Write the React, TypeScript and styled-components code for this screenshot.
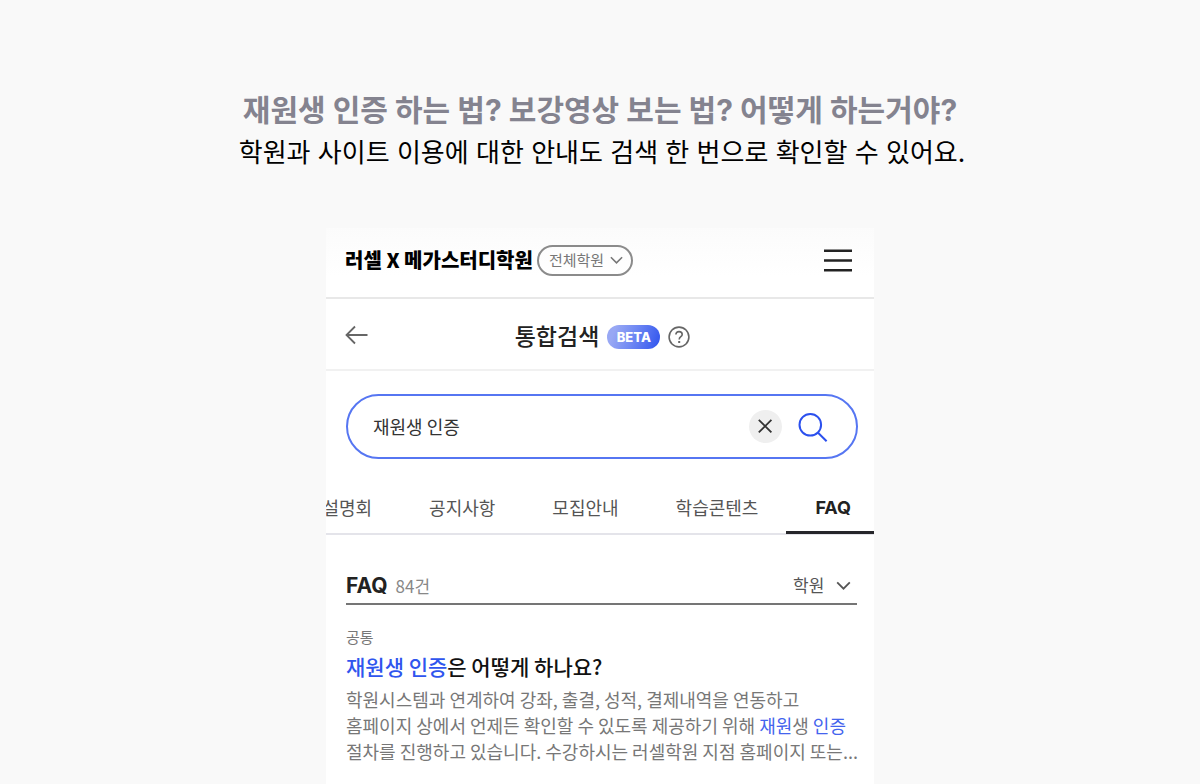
import React, { useState } from "react";
import styled, { createGlobalStyle } from "styled-components";

const GlobalStyle = createGlobalStyle`
  *, *::before, *::after { box-sizing: border-box; }
  body {
    margin: 0;
    background: #f9f9f9;
    color: #222;
    font-family: "Noto Sans CJK KR", "Noto Sans", sans-serif;
  }
  h1, h2, h3, p { margin: 0; }
  button, input, select { font: inherit; color: inherit; }
  button { padding: 0; border: 0; background: none; cursor: pointer; }
`;

const Page = styled.main`
  display: flex;
  flex-direction: column;
  align-items: center;
  min-height: 100vh;
  padding-top: 88px;
`;

const Intro = styled.header`
  font-family: Inter, "Noto Sans CJK KR", sans-serif;
  text-align: center;
`;

const Headline = styled.h1`
  color: #84838f;
  font-size: 30px;
  font-weight: 700;
  line-height: 44px;
`;

const Lead = styled.p`
  padding-left: 4px;
  color: #000;
  font-size: 26px;
  line-height: 42px;
`;

const Phone = styled.section`
  flex: 1;
  width: 100%;
  max-width: 548px;
  margin-top: 54px;
  overflow: hidden;
  background: linear-gradient(#fbfbfb, #fff 48px);
`;

const BrandBar = styled.div`
  display: flex;
  align-items: center;
  height: 71px;
  padding: 0 22px 5px 19px;
  border-bottom: 2px solid #e8e8e8;
`;

const Brand = styled.a`
  color: #000;
  font-size: 20px;
  font-weight: 900;
  line-height: 28px;
  text-decoration: none;
  white-space: nowrap;
`;

const SelectWrap = styled.label<{ $pill?: boolean }>`
  display: flex;
  align-items: center;
  gap: ${(p) => (p.$pill ? 5 : 11)}px;
  height: 31px;
  margin-left: ${(p) => (p.$pill ? "4px" : "auto")};
  padding: ${(p) => (p.$pill ? "0 8px 0 10px" : "0 6px 0 0")};
  border: ${(p) => (p.$pill ? "2px solid #8b8b8b" : "0")};
  border-radius: 16px;
  color: ${(p) => (p.$pill ? "#777" : "#555")};
`;

const Select = styled.select<{ $size: number; $width: number }>`
  width: ${(p) => p.$width}px;
  padding: 0;
  border: 0;
  appearance: none;
  background: transparent;
  font-size: ${(p) => p.$size}px;
  line-height: 24px;
`;

const MenuButton = styled.button`
  display: flex;
  margin-left: auto;
  color: #222;
`;

const TitleBar = styled.div`
  display: grid;
  grid-template-columns: 80px 1fr 80px;
  align-items: center;
  height: 72px;
  padding: 2px 18px 0 19px;
  border-bottom: 2px solid #f1f1f1;
`;

const IconButton = styled.button`
  display: flex;
  color: #666;
`;

const TitleGroup = styled.div`
  display: flex;
  align-items: center;
  justify-content: center;
  gap: 8px;
  padding: 4px 0 0 4px;
`;

const Title = styled.h2`
  padding-bottom: 4px;
  font-size: 23px;
  font-weight: 500;
  line-height: 32px;
  white-space: nowrap;
`;

const Beta = styled.span`
  width: 53px;
  border-radius: 12px;
  background: linear-gradient(110deg, #98a8f4 15%, #6f88f3 50%, #3558ee 95%);
  color: #fff;
  font-family: Inter, sans-serif;
  font-size: 13px;
  font-weight: 800;
  line-height: 24px;
  text-align: center;
`;

const SearchBox = styled.form`
  display: flex;
  align-items: center;
  height: 65px;
  margin: 23px 16px 0 20px;
  padding: 0 28px 0 25px;
  border: 2px solid #5676f2;
  border-radius: 33px;
  background: #fff;
`;

const SearchInput = styled.input`
  flex: 1;
  min-width: 0;
  padding: 0 0 2px;
  border: 0;
  outline: 0;
  background: transparent;
  color: #333;
  font-size: 18px;
  line-height: 28px;
`;

const ClearButton = styled.button`
  display: flex;
  align-items: center;
  justify-content: center;
  width: 33px;
  height: 33px;
  margin-right: 16px;
  border-radius: 50%;
  background: #efefef;
  color: #333;
`;

const SearchButton = styled.button`
  display: flex;
  color: #2b50ee;
`;

const Tabs = styled.div`
  display: flex;
  justify-content: flex-end;
  height: 50px;
  margin-top: 26px;
  box-shadow: inset 0 -2px #e4e4ea;
`;

const Tab = styled.button<{ $active?: boolean }>`
  flex: none;
  height: ${(p) => (p.$active ? 49 : 50)}px;
  padding: ${(p) => (p.$active ? "0 23px 0 29px" : "0 28px 6px 29px")};
  border-bottom: ${(p) => (p.$active ? "3px solid #26262a" : "0")};
  color: ${(p) => (p.$active ? "#222" : "#555")};
  font-family: ${(p) => (p.$active ? "Inter, sans-serif" : "inherit")};
  font-size: 18px;
  font-weight: ${(p) => (p.$active ? 700 : 400)};
  line-height: 28px;
`;

const Results = styled.section`
  padding: 32px 17px 8px 20px;
`;

const ResultsHead = styled.div`
  display: flex;
  align-items: center;
  height: 38px;
  border-bottom: 2px solid #757575;
`;

const ResultsTitle = styled.h2`
  padding-top: 1px;
  font-family: Inter, sans-serif;
  font-size: 21px;
  font-weight: 700;
  line-height: 28px;
`;

const Count = styled.span`
  margin-left: 8px;
  padding-top: 1px;
  color: #888;
  font-size: 17px;
  line-height: 28px;
`;

const Entry = styled.article`
  padding-top: 21px;
`;

const Category = styled.p`
  color: #777;
  font-size: 15px;
  line-height: 22px;
`;

const Question = styled.h3`
  margin-top: 1px;
  color: #111;
  font-size: 21px;
  font-weight: 500;
  line-height: 34px;
`;

const Answer = styled.p`
  margin-top: 3px;
  color: #777;
  font-size: 18px;
  line-height: 26px;
  white-space: nowrap;
`;

const Mark = styled.em`
  color: #2f55ee;
  font-style: normal;
`;

const AnswerMark = styled(Mark)`
  color: #4464ee;
`;

const Chevron = ({ width, height }: { width: number; height: number }) => (
  <svg width={width} height={height} viewBox="0 0 16 10" fill="none" stroke="currentColor" strokeWidth="2" aria-hidden="true">
    <path d="M1 1.5 8 8.5 15 1.5" />
  </svg>
);

const tabs = ["설명회", "공지사항", "모집안내", "학습콘텐츠", "FAQ"];

export default function App() {
  const [query, setQuery] = useState("재원생 인증");
  const [active, setActive] = useState("FAQ");

  return (
    <>
      <GlobalStyle />
      <Page>
        <Intro>
          <Headline>재원생 인증 하는 법? 보강영상 보는 법? 어떻게 하는거야?</Headline>
          <Lead>학원과 사이트 이용에 대한 안내도 검색 한 번으로 확인할 수 있어요.</Lead>
        </Intro>
        <Phone>
          <BrandBar>
            <Brand href="#">러셀 X 메가스터디학원</Brand>
            <SelectWrap $pill>
              <Select $size={15} $width={56} aria-label="학원 선택">
                <option>전체학원</option>
              </Select>
              <Chevron width={13} height={8} />
            </SelectWrap>
            <MenuButton type="button" aria-label="메뉴">
              <svg width="28" height="24" viewBox="0 0 28 24" stroke="currentColor" strokeWidth="2.4" aria-hidden="true">
                <path d="M0 2.8H28M0 12.5H28M0 22.2H28" />
              </svg>
            </MenuButton>
          </BrandBar>
          <TitleBar>
            <IconButton type="button" aria-label="뒤로">
              <svg width="23" height="20" viewBox="0 0 23 20" fill="none" stroke="currentColor" strokeWidth="1.8" aria-hidden="true">
                <path d="M22.5 10H1.5M10 1.5 1.5 10 10 18.5" />
              </svg>
            </IconButton>
            <TitleGroup>
              <Title>통합검색</Title>
              <Beta>BETA</Beta>
              <IconButton type="button" aria-label="도움말">
                <svg width="22" height="22" viewBox="0 0 22 22" fill="none" stroke="currentColor" strokeWidth="1.6" aria-hidden="true">
                  <circle cx="11" cy="11" r="9.9" />
                  <path d="M7.9 8.6C7.9 6.7 9.2 5.6 11 5.6S14.2 6.7 14.2 8.4C14.2 10.7 11.2 10.6 11.2 13.4" />
                  <path d="M11.2 15V17" strokeWidth="2" />
                </svg>
              </IconButton>
            </TitleGroup>
          </TitleBar>
          <SearchBox role="search" onSubmit={(e) => e.preventDefault()}>
            <SearchInput aria-label="검색어" value={query} onChange={(e) => setQuery(e.target.value)} />
            <ClearButton type="button" aria-label="지우기" onClick={() => setQuery("")}>
              <svg width="15" height="15" viewBox="0 0 15 15" stroke="currentColor" strokeWidth="1.8" aria-hidden="true">
                <path d="M.8.8 13.4 13.4M13.4.8.8 13.4" />
              </svg>
            </ClearButton>
            <SearchButton type="submit" aria-label="검색">
              <svg width="30" height="30" viewBox="0 0 30 30" fill="none" stroke="currentColor" strokeWidth="2" aria-hidden="true">
                <circle cx="12.3" cy="12.8" r="10.8" />
                <path d="M19.8 20.5 28.6 29.2" />
              </svg>
            </SearchButton>
          </SearchBox>
          <Tabs role="tablist">
            {tabs.map((t) => (
              <Tab key={t} type="button" role="tab" aria-selected={t === active} $active={t === active} onClick={() => setActive(t)}>
                {t}
              </Tab>
            ))}
          </Tabs>
          <Results>
            <ResultsHead>
              <ResultsTitle>FAQ</ResultsTitle>
              <Count>84건</Count>
              <SelectWrap>
                <Select $size={17} $width={32} aria-label="분류">
                  <option>학원</option>
                </Select>
                <Chevron width={15} height={9} />
              </SelectWrap>
            </ResultsHead>
            <Entry>
              <Category>공통</Category>
              <Question>
                <Mark>재원생 인증</Mark>은 어떻게 하나요?
              </Question>
              <Answer>
                학원시스템과 연계하여 강좌, 출결, 성적, 결제내역을 연동하고
                <br />
                홈페이지 상에서 언제든 확인할 수 있도록 제공하기 위해 <AnswerMark>재원</AnswerMark>생 <AnswerMark>인증</AnswerMark>
                <br />
                절차를 진행하고 있습니다. 수강하시는 러셀학원 지점 홈페이지 또는...
              </Answer>
            </Entry>
          </Results>
        </Phone>
      </Page>
    </>
  );
}
